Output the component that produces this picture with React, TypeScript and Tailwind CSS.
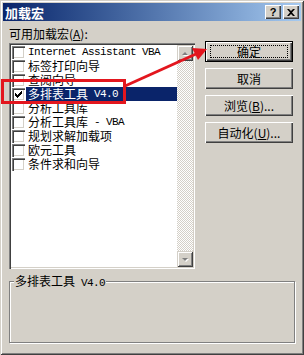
import React from 'react';

const items = [
  'Internet Assistant VBA',
  '标签打印向导',
  '查阅向导',
  '多排表工具 V4.0',
  '分析工具库',
  '分析工具库 - VBA',
  '规划求解加载项',
  '欧元工具',
  '条件求和向导',
];

// latin runs use a half-width mono like the old SimSun bitmap font
function Txt({ s }: { s: string }) {
  return (
    <>
      {s.split(/([\x00-\x7f]+)/).map((p, i) =>
        /^[\x00-\x7f]+$/.test(p) ? (
          <span
            key={i}
            className="font-['Liberation_Mono',monospace] text-[11px] leading-[12px] tracking-[-0.6px] whitespace-pre"
          >
            {p}
          </span>
        ) : (
          <span key={i} className="leading-[12px]">
            {p}
          </span>
        )
      )}
    </>
  );
}

function CheckBox({ checked }: { checked?: boolean }) {
  return (
    <div className="w-[13px] h-[13px] bg-white shrink-0 flex items-center justify-center shadow-[inset_1px_1px_0_#808080,inset_2px_2px_0_#404040,inset_-1px_-1px_0_#fff,inset_-2px_-2px_0_#d4d0c8]">
      {checked && (
        <svg width="7" height="7" viewBox="0 0 7 7">
          <path d="M0 2h1v1h1v1h1v-1h1v-1h1v-1h1v-1h1v3h-1v1h-1v1h-1v1h-1v1h-1v-1h-1v-1h-1z" fill="#000" />
        </svg>
      )}
    </div>
  );
}

function ScrollArrow({ down }: { down?: boolean }) {
  return (
    <div className="w-[16px] h-[16px] bg-[#d4d0c8] flex items-center justify-center shadow-[inset_1px_1px_0_#d4d0c8,inset_-1px_-1px_0_#404040,inset_2px_2px_0_#fff,inset_-2px_-2px_0_#808080]">
      <svg width="8" height="5" viewBox="0 0 8 5">
        {down ? (
          <>
            <path d="M1 1h6l-3 3z" fill="#fff" transform="translate(1 1)" />
            <path d="M1 1h6l-3 3z" fill="#808080" />
          </>
        ) : (
          <>
            <path d="M1 4h6l-3-3z" fill="#fff" transform="translate(1 1)" />
            <path d="M1 4h6l-3-3z" fill="#808080" />
          </>
        )}
      </svg>
    </div>
  );
}

function Btn({ children, def }: { children: React.ReactNode; def?: boolean }) {
  return (
    <div
      className={
        'w-[88px] h-[21px] bg-[#d4d0c8] flex items-center justify-center ' +
        (def
          ? 'border border-black shadow-[inset_1px_1px_0_#fff,inset_-1px_-1px_0_#404040,inset_-2px_-2px_0_#808080]'
          : 'shadow-[inset_1px_1px_0_#fff,inset_-1px_-1px_0_#404040,inset_-2px_-2px_0_#808080]')
      }
    >
      {def ? (
        <div className="w-[78px] h-[13px] border border-dotted border-black flex items-center justify-center leading-none">
          {children}
        </div>
      ) : (
        <span className="leading-none">{children}</span>
      )}
    </div>
  );
}

export default function App() {
  return (
    <div className="relative w-[304px] h-[355px] bg-[#d4d0c8] p-[3px] flex flex-col text-[12px] text-black font-['Noto_Sans_CJK_SC','Liberation_Sans',sans-serif] shadow-[inset_1px_1px_0_#d4d0c8,inset_-1px_-1px_0_#404040,inset_2px_2px_0_#fff,inset_-2px_-2px_0_#808080] overflow-hidden">
      {/* title bar */}
      <div className="h-[18px] bg-linear-to-r from-[#0a246a] to-[#a6caf0] flex items-center justify-between pl-[2px] pr-[2px]">
        <span className="text-white font-bold text-[13px] leading-none">加载宏</span>
        <div className="flex gap-[2px]">
          <div className="w-[16px] h-[14px] bg-[#d4d0c8] flex items-center justify-center font-['Liberation_Sans',sans-serif] font-bold text-[11px] leading-none shadow-[inset_1px_1px_0_#fff,inset_-1px_-1px_0_#404040,inset_-2px_-2px_0_#808080]">
            ?
          </div>
          <div className="w-[16px] h-[14px] bg-[#d4d0c8] flex items-center justify-center shadow-[inset_1px_1px_0_#fff,inset_-1px_-1px_0_#404040,inset_-2px_-2px_0_#808080]">
            <svg width="8" height="7" viewBox="0 0 8 7">
              <path d="M0 0h2l2 2 2-2h2l-3 3.5 3 3.5h-2l-2-2-2 2h-2l3-3.5z" fill="#000" />
            </svg>
          </div>
        </div>
      </div>

      {/* body */}
      <div className="flex pl-[6px]">
        <div className="flex flex-col w-[186px] pt-[6px]">
          <div className="h-[14px] leading-[14px] mb-[2px]">
            可用加载宏(<span className="underline">A</span>):
          </div>
          <div className="flex h-[226px] bg-white p-[2px] shadow-[inset_1px_1px_0_#808080,inset_2px_2px_0_#404040,inset_-1px_-1px_0_#fff,inset_-2px_-2px_0_#d4d0c8]">
            <div className="flex-1 flex flex-col">
              {items.map((it, i) => (
                <div key={it} className="h-[14px] flex items-center pl-[1px] leading-[12px]">
                  <CheckBox checked={i === 3} />
                  <div
                    className={
                      'ml-[1px] flex-1 h-[14px] flex items-center pl-[2px] whitespace-nowrap ' +
                      (i === 3 ? 'bg-[#0a246a] text-white' : '')
                    }
                  >
                    <Txt s={it} />
                  </div>
                </div>
              ))}
            </div>
            <div className="w-[16px] flex flex-col">
              <ScrollArrow />
              <div className="flex-1 bg-[repeating-conic-gradient(#fff_0%_25%,#d4d0c8_0%_50%)] bg-[length:2px_2px]" />
              <ScrollArrow down />
            </div>
          </div>
        </div>

        <div className="flex flex-col gap-[6px] ml-[10px] pt-[20px]">
          <Btn def>确定</Btn>
          <Btn>取消</Btn>
          <Btn>
            浏览(<span className="underline">B</span>)...
          </Btn>
          <Btn>
            自动化(<span className="underline">U</span>)...
          </Btn>
        </div>
      </div>

      {/* description group */}
      <fieldset className="mx-[6px] mt-[5px] h-[69px] border border-[#808080] shadow-[1px_1px_0_#fff,inset_1px_1px_0_#fff]">
        <legend className="ml-[4px] px-[1px] bg-[#d4d0c8] leading-[14px]">
          <Txt s="多排表工具 V4.0" />
        </legend>
      </fieldset>

      {/* annotation overlay */}
      <div className="absolute left-[1px] top-[79px] w-[125px] h-[25px] border-[3px] border-[#e3161e]" />
      <svg className="absolute left-0 top-0 pointer-events-none" width="304" height="355">
        <line x1="125" y1="86" x2="196" y2="54" stroke="#e3161e" strokeWidth="3" />
        <path d="M207 49 L192 48 L198 60 Z" fill="#e3161e" />
      </svg>
    </div>
  );
}
